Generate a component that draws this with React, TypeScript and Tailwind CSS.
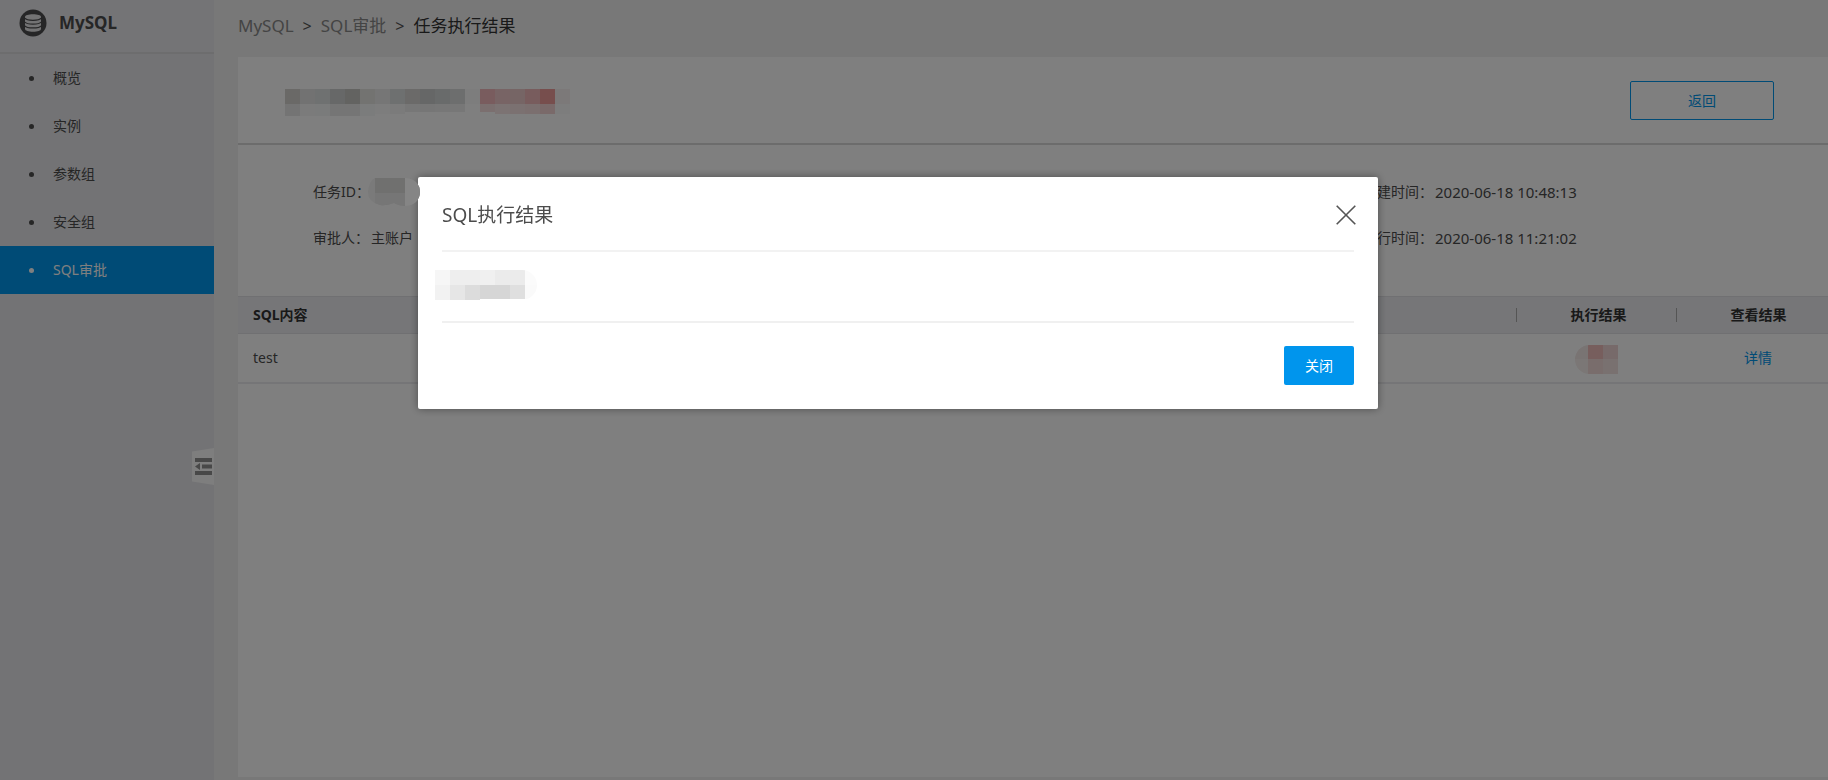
import { useState } from "react";

type Cell = { x: number; y: number; w: number; h: number; c: string };

const cells = (x: number, y: number, h: number, colors: string[], w = 15): Cell[] =>
  colors.map((c, i) => ({ x: x + i * w, y, w, h, c }));

const TITLE_CELLS: Cell[] = [
  ...cells(0, 0, 15, ["#d4d2ce", "#e4e4e4", "#dee2e2", "#ced0d0", "#c6c6c2", "#e6e6e2", "#ececec", "#dce0e0", "#d6d4d2", "#cccece", "#d2d6d6", "#dadcdc", "#fbfbfb"]),
  ...cells(0, 15, 12, ["#e8e8e8", "#f6f6f6", "#f4f6f6", "#ebebeb", "#ebebeb", "#f6f8f8"]),
  ...cells(90, 15, 10, ["#fafafa", "#f6f6f6"]),
  ...cells(120, 15, 8, ["#eeeeee", "#ececec", "#eeeeee", "#eeeeee"]),
  ...cells(195, 0, 15, ["#f2b8bc", "#f0c8ca", "#eccaca", "#f0b8ba", "#ee9c9a", "#f8f2f2"]),
  ...cells(195, 15, 8, ["#f6dede"]),
  ...cells(210, 15, 10, ["#f8e6e6", "#f6e2e2", "#f6dede", "#f4d4d4", "#fbfbfb"]),
];

const RESULT_CELLS: Cell[] = [
  ...cells(0, 0, 14, ["#f2e8e6"], 13),
  ...cells(13, 0, 14, ["#eebcba", "#eed4d4"]),
  ...cells(0, 14, 15, ["#f6eeec"], 13),
  ...cells(13, 14, 15, ["#f2dad8", "#f2e2e0"]),
];

const OUTPUT_CELLS: Cell[] = [
  ...cells(0, 0, 15, ["#f6f6f6", "#eeeeee", "#eeeeee", "#f0f0f0", "#ebebeb", "#ebebeb", "#fbfbfb"]),
  ...cells(0, 15, 15, ["#f2f2f2", "#e6e6e6", "#dcdcdc"]),
  ...cells(45, 15, 14, ["#d6d6d6", "#d6d6d6", "#dfdfdf", "#fafafa"]),
];

function Mosaic({ data, w, h, className }: { data: Cell[]; w: number; h: number; className: string }) {
  return (
    <svg width={w} height={h} viewBox={`0 0 ${w} ${h}`} shapeRendering="crispEdges" className={className} aria-hidden="true">
      {data.map((d, i) => (
        <rect key={i} x={d.x} y={d.y} width={d.w} height={d.h} fill={d.c} />
      ))}
    </svg>
  );
}

function DatabaseLogo() {
  return (
    <svg width="28" height="28" viewBox="0 0 28 28" aria-hidden="true">
      <circle cx="14" cy="14" r="13.500" fill="#4c4c4e" />
      <path
        d="M6 8c0-1.700 3.500-2.700 8-2.700s8 1 8 2.700v12c0 1.700-3.500 2.700-8 2.700s-8-1-8-2.700z"
        fill="#e6e6e8"
      />
      <g fill="none" stroke="#4c4c4e" strokeWidth="1.200">
        <path d="M5.800 9.200c1.200 1.600 4.500 2.100 8.200 2.100s7-.5 8.200-2.100" />
        <path d="M5.800 13c1.200 1.600 4.500 2.100 8.200 2.100s7-.5 8.200-2.100" />
        <path d="M5.800 16.800c1.200 1.600 4.500 2.100 8.200 2.100s7-.5 8.200-2.100" />
      </g>
    </svg>
  );
}

const NAV = ["概览", "实例", "参数组", "安全组", "SQL审批"];

function Sidebar() {
  return (
    <aside className="relative w-[214px] shrink-0 bg-[#e6e6ea]">
      <div className="flex h-[54px] items-start gap-3 border-b-2 border-[#dadadd] bg-[#e9e9ec] pt-[9px] pl-[19px]">
        <DatabaseLogo />
        <h1 className="text-[17px] leading-7 font-bold text-[#4c4c4c]">MySQL</h1>
      </div>
      <nav>
        {NAV.map((label) => {
          const active = label === "SQL审批";
          return (
            <a
              key={label}
              href="#"
              aria-current={active ? "page" : undefined}
              className={
                active
                  ? "flex h-12 items-center gap-[19px] bg-[#0096ec] pl-[29px] text-sm text-white"
                  : "flex h-12 items-center gap-[19px] pl-[29px] text-sm text-[#4c4c4c]"
              }
            >
              <span className="size-[5px] rounded-full bg-current" />
              {label}
            </a>
          );
        })}
      </nav>
      <button type="button" aria-label="收起" className="absolute top-[448px] right-0">
        <svg width="22" height="37" viewBox="0 0 22 37" className="block" aria-hidden="true">
          <path d="M0 3.500 L22 0 V37 L0 33.500Z" fill="#fcfcfc" />
          <g fill="#909090">
            <rect x="3" y="10" width="17" height="4" />
            <rect x="10" y="16.500" width="10" height="4" />
            <rect x="3" y="23" width="17" height="4" />
            <path d="M3 18.500 L8 15 V22Z" />
          </g>
        </svg>
      </button>
    </aside>
  );
}

function ResultDialog({ onClose }: { onClose: () => void }) {
  return (
    <div className="fixed inset-0 z-10 flex items-start justify-center bg-black/50 pt-[177px] pr-8">
      <section
        role="dialog"
        aria-modal="true"
        aria-labelledby="dialog-title"
        className="w-full max-w-[960px] rounded-xs bg-white px-6 shadow-[0_0_8px_rgba(0,0,0,0.4)]"
      >
        <header className="flex h-[75px] items-center justify-between border-b-2 border-[#f2f2f2] pt-0.5">
          <h2 id="dialog-title" className="text-[19px] leading-7 text-[#4c4c4c]">
            SQL执行结果
          </h2>
          <button type="button" aria-label="关闭窗口" onClick={onClose} className="-mr-0.5">
            <svg width="20" height="20" viewBox="0 0 20 20" className="block" aria-hidden="true">
              <path d="M.7.700 19.300 19.300M19.300.700.700 19.300" stroke="#555" strokeWidth="1.600" />
            </svg>
          </button>
        </header>
        <div className="border-b-2 border-[#f0f0f0] pt-[18px] pb-[21px]">
          <Mosaic data={OUTPUT_CELLS} w={102} h={30} className="-ml-[7px] block rounded-l-md rounded-r-full" />
        </div>
        <footer className="flex justify-end pt-[23px] pb-6">
          <button type="button" onClick={onClose} className="h-[39px] w-[70px] rounded-xs bg-[#0095ed] text-sm text-white">
            关闭
          </button>
        </footer>
      </section>
    </div>
  );
}

function Masked() {
  return (
    <svg width="52" height="28" viewBox="0 0 52 28" className="relative z-20 -ml-1" aria-hidden="true">
      <defs>
        <clipPath id="blob">
          <path d="M12 0H38A14 14 0 0 1 38 28Q31 28 26 25Q18 28 12 27Q0 24 0 14Q1 3 7 0Z" />
        </clipPath>
      </defs>
      <g clipPath="url(#blob)">
        <rect width="52" height="28" fill="#7a7a7a" />
        <rect x="7" width="30" height="15" fill="#70706f" />
        <rect x="7" y="15" width="30" height="13" fill="#767676" />
        <rect x="37" width="15" height="28" fill="#858585" />
      </g>
    </svg>
  );
}

export default function App() {
  const [open, setOpen] = useState(true);
  return (
    <div className="flex min-h-screen overflow-x-hidden bg-[#f0f0f0] font-['Noto_Sans','Noto_Sans_CJK_SC',sans-serif] text-sm text-[#4c4c4c]">
      <Sidebar />
      <main className="flex min-w-0 flex-1 flex-col pb-[3px] pl-6">
        <nav aria-label="面包屑" className="flex h-[57px] items-center gap-[9px] pb-[5px] text-[17px] text-[#888]">
          <a href="#">MySQL</a>
          <span className="text-base text-[#555]">&gt;</span>
          <a href="#">SQL审批</a>
          <span className="text-base text-[#555]">&gt;</span>
          <span className="text-[#333]">任务执行结果</span>
        </nav>
        <div className="flex-1 bg-white">
          <div className="flex h-[88px] items-center justify-between border-b-2 border-[#d8d8d8] pt-px pr-[54px] pl-[47px]">
            <Mosaic data={TITLE_CELLS} w={285} h={27} className="mt-1" />
            <button type="button" className="h-[39px] w-36 rounded-xs border border-[#0096ec] text-sm text-[#0096ec]">
              返回
            </button>
          </div>
          <div className="grid grid-cols-[1050fr_465fr] gap-y-[22px] pt-[35px] pb-[46px] pl-[75px] leading-6">
            <div className="flex h-6 items-center gap-0.5">
              <span>任务ID：</span>
              <Masked />
            </div>
            <div className="flex h-6 items-center gap-0.5">
              <span>创建时间：</span>
              <span className="text-[15px]">2020-06-18 10:48:13</span>
            </div>
            <div className="flex h-6 items-center gap-0.5">
              <span>审批人：</span>
              <span>主账户</span>
            </div>
            <div className="flex h-6 items-center gap-0.5">
              <span>执行时间：</span>
              <span className="text-[15px]">2020-06-18 11:21:02</span>
            </div>
          </div>
          <table className="w-full table-fixed border-collapse">
            <thead>
              <tr className="h-[37px] border-y border-[#e0e0e4] bg-[#ecedf1] text-[#333]">
                <th className="p-0 pl-[15px] text-left leading-5 font-bold">SQL内容</th>
                <th className="w-40 p-0 font-bold">
                  <div className="flex h-[14px] items-center justify-center border-l border-[#aaa] pl-1">执行结果</div>
                </th>
                <th className="w-[152px] p-0 font-bold">
                  <div className="flex h-[14px] items-center justify-center border-l border-[#aaa] pl-3">查看结果</div>
                </th>
              </tr>
            </thead>
            <tbody>
              <tr className="h-[49px] border-b-2 border-[#ebebee]">
                <td className="p-0 pl-[15px]">test</td>
                <td className="p-0 pt-1">
                  <Mosaic data={RESULT_CELLS} w={43} h={29} className="mx-auto rounded-l-full" />
                </td>
                <td className="p-0 pl-3 text-center">
                  <a href="#" className="text-[#0096ec]">
                    详情
                  </a>
                </td>
              </tr>
            </tbody>
          </table>
        </div>
      </main>
      {open && <ResultDialog onClose={() => setOpen(false)} />}
    </div>
  );
}
